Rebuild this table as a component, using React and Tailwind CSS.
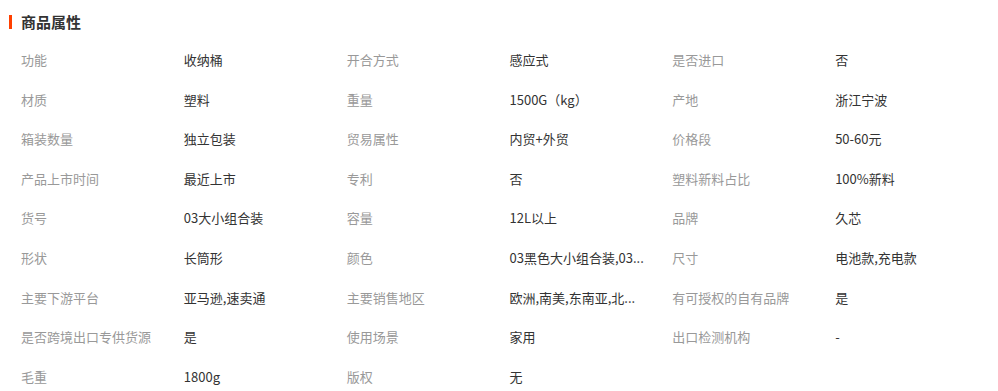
import React from 'react'

const rows = [
  ['功能', '收纳桶', '开合方式', '感应式', '是否进口', '否'],
  ['材质', '塑料', '重量', '1500G（kg）', '产地', '浙江宁波'],
  ['箱装数量', '独立包装', '贸易属性', '内贸+外贸', '价格段', '50-60元'],
  ['产品上市时间', '最近上市', '专利', '否', '塑料新料占比', '100%新料'],
  ['货号', '03大小组合装', '容量', '12L以上', '品牌', '久芯'],
  ['形状', '长筒形', '颜色', '03黑色大小组合装,03...', '尺寸', '电池款,充电款'],
  ['主要下游平台', '亚马逊,速卖通', '主要销售地区', '欧洲,南美,东南亚,北...', '有可授权的自有品牌', '是'],
  ['是否跨境出口专供货源', '是', '使用场景', '家用', '出口检测机构', '-'],
  ['毛重', '1800g', '版权', '无'],
]

export default function App() {
  return (
    <div
      className="w-[998px] h-[391px] overflow-hidden bg-white"
      style={{ fontFamily: '"Microsoft YaHei", "Noto Sans CJK SC", sans-serif' }}
    >
      <div className="flex items-center h-[40px] pl-[9px] pt-[3px]">
        <span className="w-[3px] h-[14px] bg-[#ff4000]" />
        <h2 className="ml-[9px] text-[15px] font-bold text-[#333] leading-none">商品属性</h2>
      </div>
      <div className="pl-[21px] grid grid-cols-6 w-[998px]">
        {rows.map((r, i) =>
          r.map((t, j) => (
            <div
              key={i + '-' + j}
              className={
                'h-[39.6px] flex items-center text-[13px] min-w-0 whitespace-nowrap ' +
                (j % 2 === 0 ? 'text-[#999]' : 'text-[#333]')
              }
            >
              {t}
            </div>
          ))
        )}
      </div>
    </div>
  )
}
